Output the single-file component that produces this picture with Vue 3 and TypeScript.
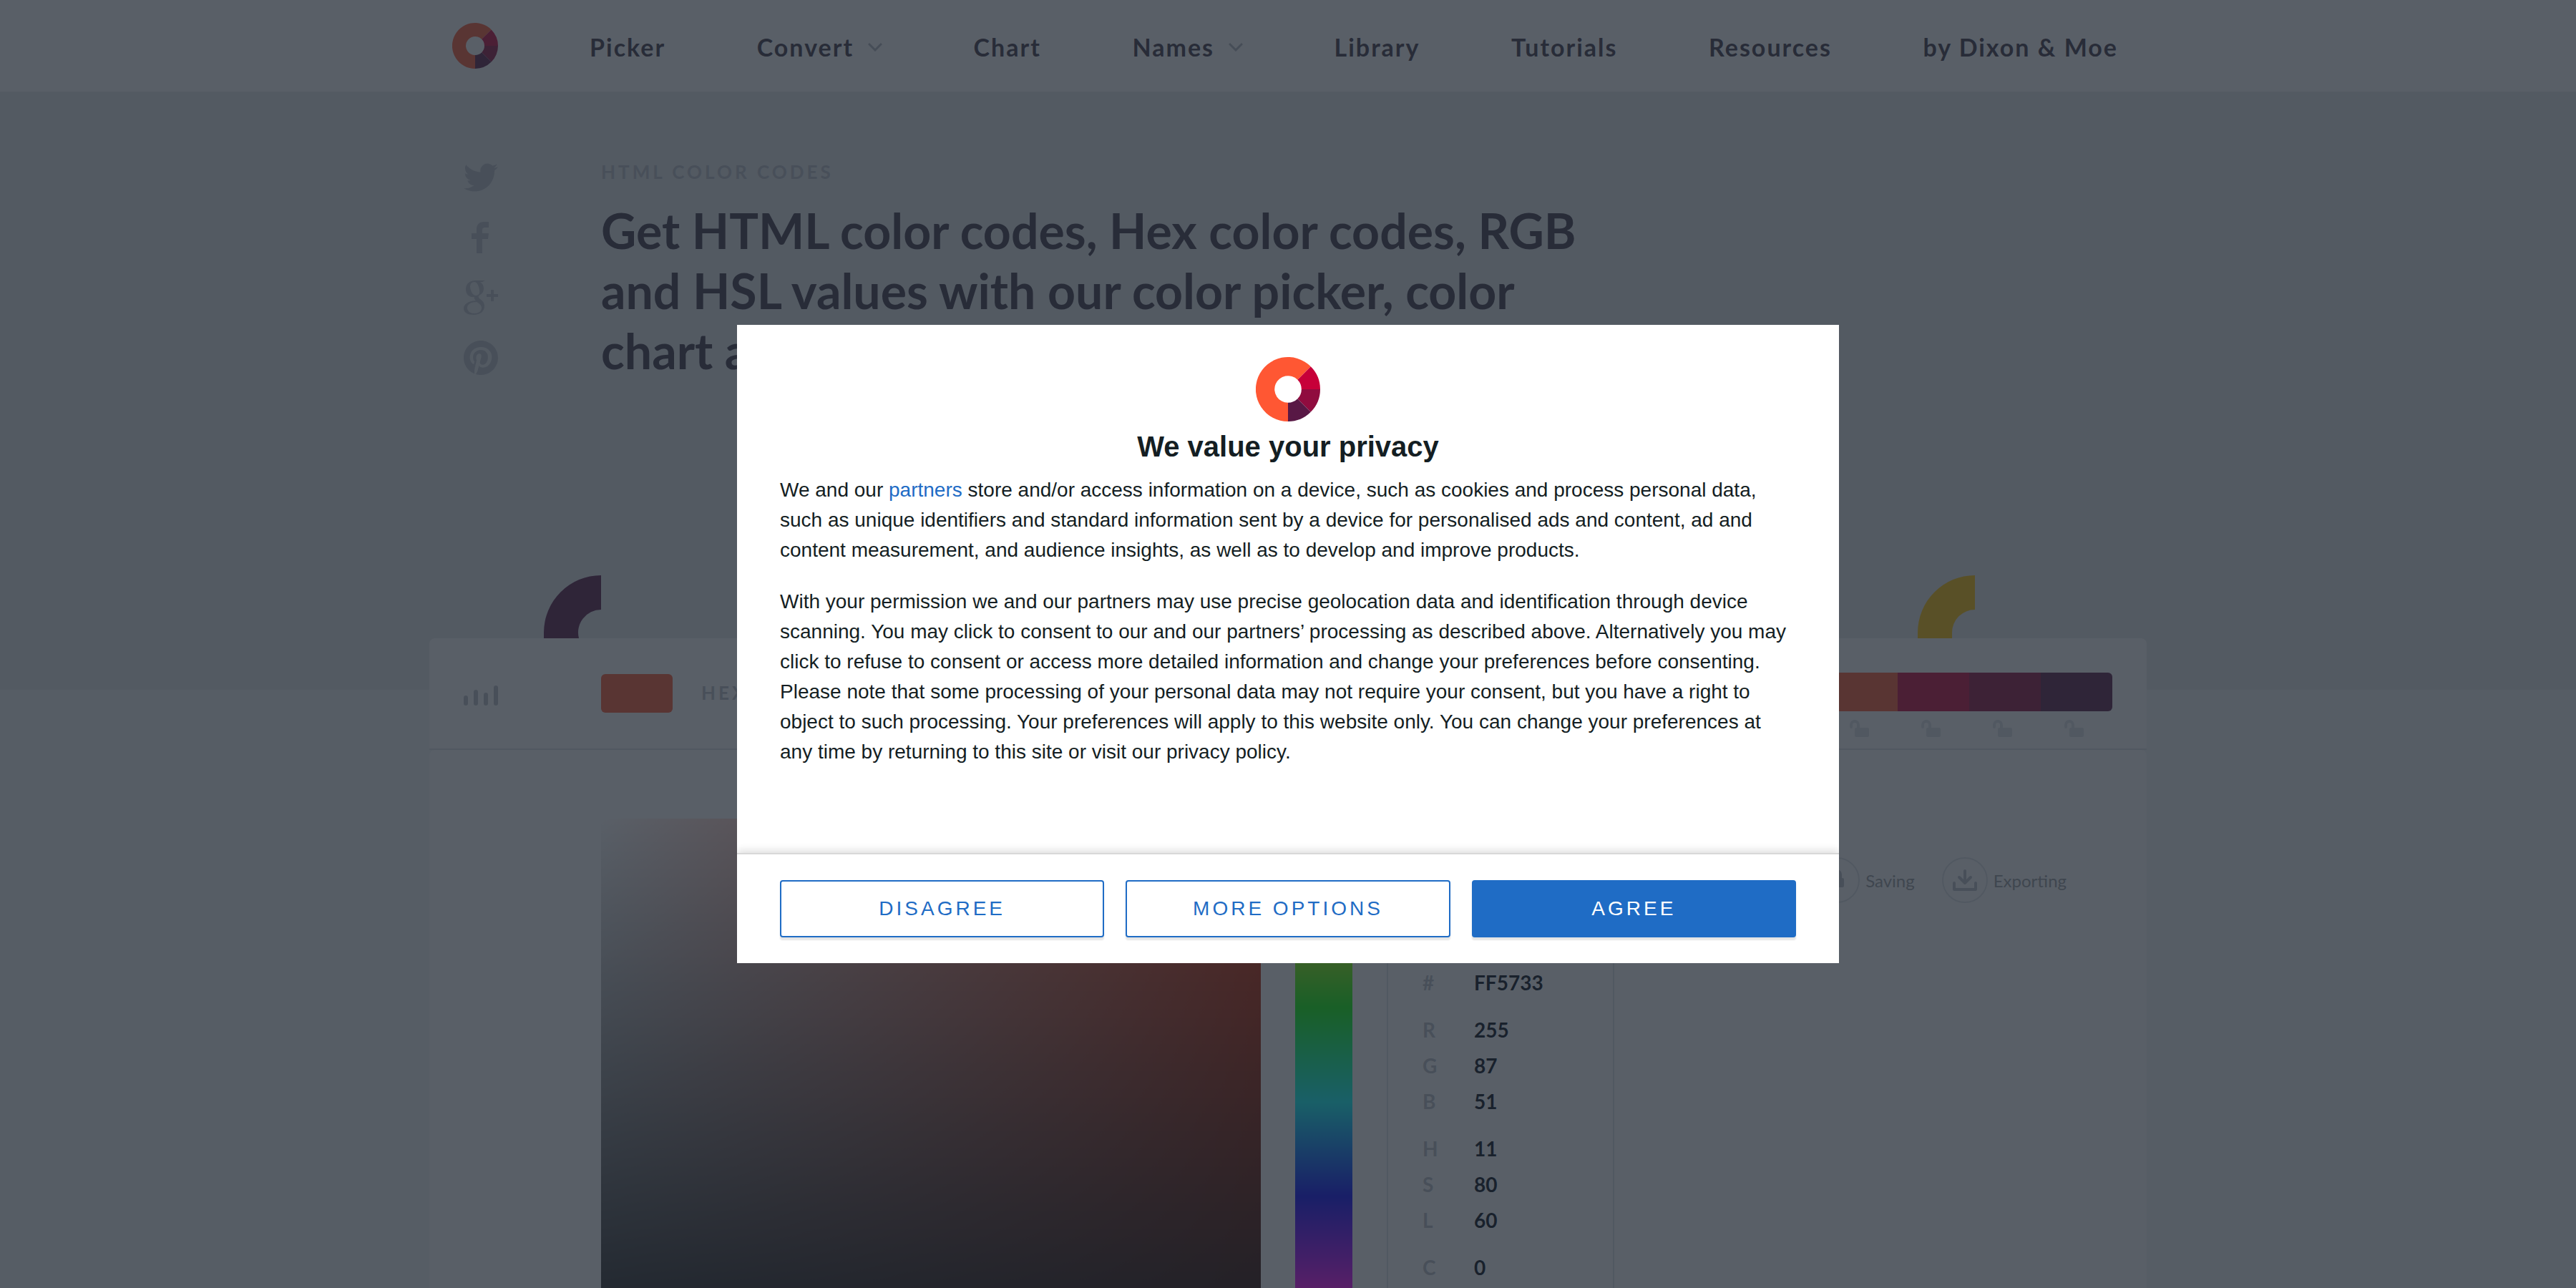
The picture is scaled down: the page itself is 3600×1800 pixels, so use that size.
<script setup lang="ts">
interface NavItem {
  label: string
  menu?: boolean
}

interface Channel {
  id: string
  value: string
}

const navItems: NavItem[] = [
  { label: 'Picker' },
  { label: 'Convert', menu: true },
  { label: 'Chart' },
  { label: 'Names', menu: true },
  { label: 'Library' },
  { label: 'Tutorials' },
  { label: 'Resources' },
  { label: 'by Dixon & Moe' },
]

const palette: string[] = ['#ffc300', '#ff5733', '#c70039', '#900c3f', '#581845']

const channelGroups: Channel[][] = [
  [{ id: '#', value: 'FF5733' }],
  [
    { id: 'R', value: '255' },
    { id: 'G', value: '87' },
    { id: 'B', value: '51' },
  ],
  [
    { id: 'H', value: '11' },
    { id: 'S', value: '80' },
    { id: 'L', value: '60' },
  ],
  [{ id: 'C', value: '0' }],
]
</script>

<template>
  <div class="page">
    <header class="topbar">
      <div class="container topbar-row">
        <a href="#" class="brand" aria-label="Home">
          <svg class="logo" viewBox="0 0 64 64" aria-hidden="true">
            <path fill="#ff5733" d="M32 64A32 32 0 1 1 54.6 9.4L41.2 22.8A13 13 0 1 0 32 45z" />
            <path fill="#c70039" d="M54.6 9.4A32 32 0 0 1 64 32H45A13 13 0 0 0 41.2 22.8z" />
            <path fill="#900c3f" d="M64 32A32 32 0 0 1 54.6 54.6L41.2 41.2A13 13 0 0 0 45 32z" />
            <path fill="#581845" d="M54.6 54.6A32 32 0 0 1 32 64V45A13 13 0 0 0 41.2 41.2z" />
          </svg>
        </a>
        <nav class="nav">
          <a v-for="item in navItems" :key="item.label" href="#">
            {{ item.label }}
            <svg v-if="item.menu" class="chevron" viewBox="0 0 20 12" aria-hidden="true">
              <path d="M1 1l9 9 9-9" />
            </svg>
          </a>
        </nav>
      </div>
    </header>

    <section class="hero">
      <div class="container hero-row">
        <div class="social">
          <a href="#" aria-label="Twitter">
            <svg width="48" height="48" viewBox="0 0 24 24">
              <path d="M23.953 4.57a10 10 0 01-2.825.775 4.958 4.958 0 002.163-2.723c-.951.555-2.005.959-3.127 1.184a4.92 4.92 0 00-8.384 4.482C7.69 8.095 4.067 6.13 1.64 3.162a4.822 4.822 0 00-.666 2.475c0 1.71.87 3.213 2.188 4.096a4.904 4.904 0 01-2.228-.616v.06a4.923 4.923 0 003.946 4.827 4.996 4.996 0 01-2.212.085 4.936 4.936 0 004.604 3.417 9.867 9.867 0 01-6.102 2.105c-.39 0-.779-.023-1.17-.067a13.995 13.995 0 007.557 2.209c9.053 0 13.998-7.496 13.998-13.985 0-.21 0-.42-.015-.63A9.935 9.935 0 0024 4.59z" />
            </svg>
          </a>
          <a href="#" aria-label="Facebook">
            <svg width="48" height="48" viewBox="0 0 48 48">
              <path d="M35 2v8h-5c-3 0-4 1-4 4v4h9l-1 8h-8v20h-8V26h-7v-8h7v-6c0-6 4-10 10-10z" />
            </svg>
          </a>
          <a href="#" aria-label="Google Plus">
            <svg width="48" height="48" viewBox="0 0 48 48">
              <path fill-rule="evenodd" d="M30 0l-4 2h-3c3 2 5 5 5 9 0 5-2 7-5 9-3 2-3 4 0 6 4 3 6 5 6 10 0 7-6 12-15 12C6 48 0 45 0 39c0-6 6-10 17-11-2-2-3-3-2-5C7 24 3 19 3 12 3 5 8 0 16 0zM15 2c-4 0-6 3-6 7 1 7 4 12 8 12 4 0 6-3 5-8-1-7-4-11-7-11zM18 30C9 30 5 34 5 38c0 5 4 8 10 8s10-3 10-8c0-3-2-5-7-8z" />
              <path d="M38 13h4v6h6v4h-6v6h-4v-6h-6v-4h6z" />
            </svg>
          </a>
          <a href="#" aria-label="Pinterest">
            <svg width="48" height="48" viewBox="0 0 24 24">
              <path d="M12 0C5.373 0 0 5.373 0 12c0 5.084 3.163 9.426 7.627 11.174-.105-.949-.2-2.405.042-3.441.218-.937 1.407-5.965 1.407-5.965s-.359-.719-.359-1.782c0-1.668.967-2.914 2.171-2.914 1.023 0 1.518.769 1.518 1.69 0 1.029-.655 2.568-.994 3.995-.283 1.194.599 2.169 1.777 2.169 2.133 0 3.772-2.249 3.772-5.495 0-2.873-2.064-4.882-5.012-4.882-3.414 0-5.418 2.561-5.418 5.207 0 1.031.397 2.138.893 2.738a.36.36 0 01.083.345l-.333 1.36c-.053.22-.174.267-.402.161-1.499-.698-2.436-2.889-2.436-4.649 0-3.785 2.75-7.262 7.929-7.262 4.163 0 7.398 2.967 7.398 6.931 0 4.136-2.607 7.464-6.227 7.464-1.216 0-2.359-.631-2.75-1.378l-.748 2.853c-.271 1.043-1.002 2.35-1.492 3.146C9.57 23.812 10.763 24 12 24c6.627 0 12-5.373 12-12S18.627 0 12 0z" />
            </svg>
          </a>
        </div>
        <div class="intro">
          <p class="eyebrow">HTML COLOR CODES</p>
          <h1>
            Get HTML color codes, Hex color codes, RGB and HSL values with our color picker, color
            chart and HTML color names.
          </h1>
        </div>
      </div>
      <div class="container shapes">
        <svg width="80" height="88" viewBox="0 0 80 88" aria-hidden="true">
          <path fill="#581845" d="M80 0v48a32 32 0 0 0-31 40H0v-8A80 80 0 0 1 80 0z" />
        </svg>
        <svg width="80" height="88" viewBox="0 0 80 88" aria-hidden="true">
          <path fill="#ffc300" d="M80 0v48a32 32 0 0 0-32 32v8H0v-8A80 80 0 0 1 80 0z" />
        </svg>
      </div>
    </section>

    <main class="container tool">
      <div class="panel tool-head">
        <svg class="bars" width="48" height="28" viewBox="0 0 48 28" aria-hidden="true">
          <path d="M3 17v8M17 9v16M31 13v12M45 3v22" />
        </svg>
        <div class="swatch"></div>
        <span class="head-label">HEX</span>
        <div class="palette">
          <div v-for="color in palette" :key="color" class="palette-item">
            <div class="palette-color" :style="{ background: color }"></div>
            <svg width="34" height="24" viewBox="0 0 34 24" aria-hidden="true">
              <path class="shackle" d="M2 10V7a5 5 0 0 1 10 0v5" />
              <rect x="7" y="11" width="20" height="13" rx="2" />
            </svg>
          </div>
        </div>
      </div>
      <div class="panel tool-body">
        <div class="saturation"></div>
        <div class="hue"></div>
        <form class="channels">
          <div v-for="(group, g) in channelGroups" :key="g" class="channel-group">
            <label v-for="channel in group" :key="channel.id">
              <span>{{ channel.id }}</span>
              <input type="text" :value="channel.value" />
            </label>
          </div>
        </form>
        <div class="actions">
          <a href="#">
            <span class="round">
              <svg width="36" height="36" viewBox="0 0 36 36">
                <rect x="8" y="15" width="20" height="13" rx="2" />
                <path class="stroke" d="M13 16v-6a5 5 0 0 1 10 0v6" />
              </svg>
            </span>
            Saving
          </a>
          <a href="#">
            <span class="round">
              <svg width="36" height="36" viewBox="0 0 36 36">
                <path class="stroke" d="M18 5v17M10 14l8 8 8-8M3 22v9h30v-9" />
              </svg>
            </span>
            Exporting
          </a>
        </div>
      </div>
    </main>

    <div class="overlay">
      <div class="dialog" role="dialog" aria-labelledby="consent-title">
        <div class="dialog-body">
          <svg class="dialog-logo" viewBox="0 0 64 64" aria-hidden="true">
            <path fill="#ff5733" d="M32 64A32 32 0 1 1 54.6 9.4L41.5 22.5A13.4 13.4 0 1 0 32 45.4z" />
            <path fill="#c70039" d="M54.6 9.4A32 32 0 0 1 64 32H45.4A13.4 13.4 0 0 0 41.5 22.5z" />
            <path fill="#900c3f" d="M64 32A32 32 0 0 1 54.6 54.6L41.5 41.5A13.4 13.4 0 0 0 45.4 32z" />
            <path fill="#581845" d="M54.6 54.6A32 32 0 0 1 32 64V45.4A13.4 13.4 0 0 0 41.5 41.5z" />
          </svg>
          <h2 id="consent-title">We value your privacy</h2>
          <p>
            We and our <a href="#">partners</a> store and/or access information on a device, such as
            cookies and process personal data, such as unique identifiers and standard information
            sent by a device for personalised ads and content, ad and content measurement, and
            audience insights, as well as to develop and improve products.
          </p>
          <p>
            With your permission we and our partners may use precise geolocation data and
            identification through device scanning. You may click to consent to our and our
            partners’ processing as described above. Alternatively you may click to refuse to
            consent or access more detailed information and change your preferences before
            consenting. Please note that some processing of your personal data may not require your
            consent, but you have a right to object to such processing. Your preferences will apply
            to this website only. You can change your preferences at any time by returning to this
            site or visit our privacy policy.
          </p>
        </div>
        <div class="dialog-actions">
          <button type="button">DISAGREE</button>
          <button type="button">MORE OPTIONS</button>
          <button type="button" class="primary">AGREE</button>
        </div>
      </div>
    </div>
  </div>
</template>

<style>
body {
  margin: 0;
  background: #f2f5f8;
}
</style>

<style scoped>
.page {
  height: 100vh;
  overflow: hidden;
  font-family: Lato, sans-serif;
  color: #3d3544;
}

.page * {
  box-sizing: border-box;
}

a {
  color: inherit;
  text-decoration: none;
}

svg {
  display: block;
  flex: none;
}

.container {
  width: 100%;
  max-width: 2400px;
  margin: 0 auto;
}

.topbar {
  background: #fff;
}

.topbar-row {
  display: flex;
  align-items: center;
  height: 128px;
  padding: 0 40px 0 32px;
}

.logo {
  width: 64px;
  height: 64px;
}

.nav {
  flex: 1;
  display: flex;
  justify-content: space-between;
  margin-left: 128px;
  padding-top: 4px;
  font-size: 34px;
  font-weight: 700;
  line-height: 40px;
  letter-spacing: 2px;
}

.nav a {
  display: flex;
  align-items: center;
  gap: 20px;
  white-space: nowrap;
}

.chevron {
  width: 20px;
  height: 12px;
  fill: none;
  stroke: #b4b8c0;
  stroke-width: 3;
}

.hero {
  background: #e5e9ec;
  padding: 96px 0 72px;
}

.hero-row {
  display: flex;
  height: 580px;
}

.social {
  display: flex;
  flex-direction: column;
  gap: 36px;
  width: 240px;
  padding-left: 48px;
  fill: #bcc0c7;
}

.intro {
  width: 1400px;
}

.eyebrow {
  margin: 0;
  font-size: 26px;
  font-weight: 700;
  line-height: 32px;
  letter-spacing: 4px;
  color: #bcc0c7;
}

h1 {
  margin: 24px 0 0;
  font-size: 68px;
  font-weight: 700;
  line-height: 84px;
}

.shapes {
  display: flex;
  justify-content: space-between;
  padding: 0 240px 0 160px;
}

.tool {
  position: relative;
  margin-top: -72px;
}

.panel {
  background: #fff;
  border-radius: 8px;
}

.tool-head {
  display: flex;
  align-items: flex-start;
  height: 156px;
  padding: 48px 48px 0;
  border-bottom: 2px solid #e0e4e8;
  border-radius: 8px 8px 0 0;
}

.bars {
  margin-top: 18px;
  fill: none;
  stroke: #bcc0c7;
  stroke-width: 6;
  stroke-linecap: round;
}

.swatch {
  width: 100px;
  height: 54px;
  margin: 2px 40px 0 144px;
  border-radius: 6px;
  background: #ff5733;
}

.head-label {
  margin-top: 12px;
  font-size: 26px;
  font-weight: 700;
  line-height: 32px;
  letter-spacing: 4px;
  color: #bcc0c7;
}

.palette {
  display: flex;
  margin-left: auto;
}

.palette-item {
  display: flex;
  flex-direction: column;
  gap: 12px;
  align-items: center;
  width: 100px;
  fill: #e0e4e8;
}

.palette-color {
  width: 100%;
  height: 54px;
}

.palette-item:first-child .palette-color {
  border-radius: 6px 0 0 6px;
}

.palette-item:last-child .palette-color {
  border-radius: 0 6px 6px 0;
}

.shackle {
  fill: none;
  stroke: #e0e4e8;
  stroke-width: 4;
  stroke-linecap: round;
}

.tool-body {
  display: flex;
  padding: 96px 112px 48px 240px;
}

.saturation {
  flex: 1;
  height: 792px;
  border-radius: 6px;
  background: linear-gradient(to top, #000, transparent), linear-gradient(to right, #fff, #ff2f00);
}

.hue {
  width: 80px;
  height: 792px;
  margin: 0 48px;
  background: linear-gradient(#f00, #ff0, #0f0, #0ff, #00f, #f0f, #f00);
}

.channels {
  width: 318px;
  padding: 204px 0 0 48px;
  border: solid #e0e4e8;
  border-width: 0 2px;
}

.channel-group {
  margin-bottom: 16px;
}

.channels label {
  display: flex;
  align-items: center;
  height: 50px;
  font-size: 28px;
  font-weight: 700;
  color: #bcc0c7;
}

.channels span {
  width: 72px;
}

.channels input {
  width: 160px;
  padding: 0;
  border: 0;
  background: none;
  font: inherit;
  color: #000814;
}

.actions {
  display: flex;
  align-items: flex-start;
  justify-content: flex-end;
  gap: 38px;
  width: 632px;
  padding-top: 54px;
  font-size: 24px;
  color: #999da0;
}

.actions a {
  display: flex;
  align-items: center;
  gap: 8px;
}

.round {
  display: flex;
  align-items: center;
  justify-content: center;
  width: 64px;
  height: 64px;
  border: 2px solid #e0e4e8;
  border-radius: 50%;
  fill: #bcc0c7;
}

.stroke {
  fill: none;
  stroke: #bcc0c7;
  stroke-width: 4;
  stroke-linecap: round;
  stroke-linejoin: round;
}

.overlay {
  position: fixed;
  inset: 0;
  display: flex;
  align-items: center;
  justify-content: center;
  background: rgba(33, 41, 52, 0.75);
  font-family: "Liberation Sans", Arial, sans-serif;
}

.dialog {
  width: 1540px;
  max-width: 100%;
  background: #fff;
  color: #141e23;
}

.dialog-body {
  padding: 45px 60px 120px;
}

.dialog-logo {
  width: 90px;
  height: 90px;
  margin: 0 auto 5px;
}

h2 {
  margin: 0 0 10px;
  font-size: 40px;
  line-height: 60px;
  text-align: center;
}

.dialog p {
  margin: 0;
  font-size: 28px;
  line-height: 42px;
}

.dialog p + p {
  margin-top: 30px;
}

.dialog p a {
  color: #1f6cc5;
}

.dialog-actions {
  display: flex;
  gap: 30px;
  padding: 36px 60px;
  border-top: 2px solid #d8d8d8;
  box-shadow: 0 -4px 10px rgba(0, 0, 0, 0.12);
  clip-path: inset(-20px 0 0 0);
}

button {
  flex: 1;
  height: 80px;
  padding: 0;
  border: 2px solid #1f6cc5;
  border-radius: 4px;
  background: #fff;
  box-shadow: 0 4px 2px rgba(0, 0, 0, 0.1);
  font: inherit;
  font-size: 28px;
  letter-spacing: 4px;
  color: #1f6cc5;
}

button.primary {
  background: #1f6cc5;
  color: #fff;
}
</style>
